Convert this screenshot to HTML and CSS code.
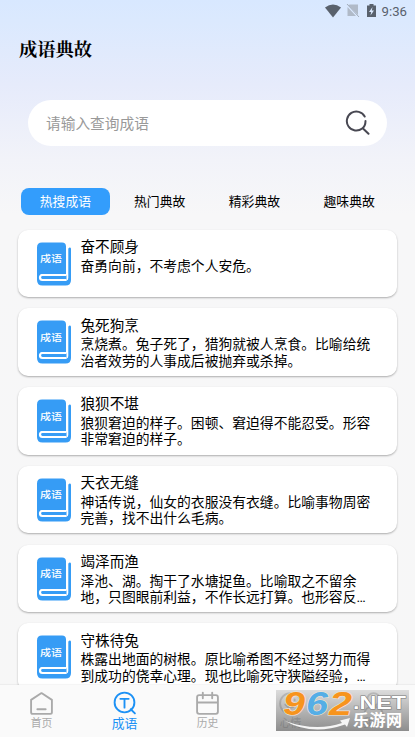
FILE: index.html
```html
<!DOCTYPE html>
<html lang="zh-CN">
<head>
<meta charset="utf-8">
<title>成语典故</title>
<link rel="stylesheet" href="styles.css">
</head>
<body>
<svg class="defs" width="0" height="0">
  <symbol id="book" viewBox="0 0 34 44">
    <path d="M5 .5H25Q29 .5 29 4.500V32H5.500Q2.500 32 2.500 35T5.500 38.500H29Q31.300 38.500 31.300 36V7Q31.300 5.500 32.700 5.500T34 7V38Q34 43.500 28.500 43.500H5.500Q0 43.500 0 38V5.500Q0 .5 5 .5Z" fill="#369cf5"/>
    <path d="M29.500 33H5.500a2.500 2.500 0 0 0 0 5H29.500" fill="#369cf5" stroke="#fff" stroke-width="2.200"/>
  </symbol>
</svg>
<div class="app">
  <div class="status">
    <svg width="52" height="16" viewBox="0 0 52 16">
      <path d="M0 4.500Q8 -1.500 16 4.500L8 14.500Z" fill="#59616c"/>
      <path d="M25 1.500H33V12L23 2ZM22.500 4L31 13H22.500Z" fill="#b0bac8"/>
      <path d="M22 1L34 14" stroke="#a4aebc" stroke-width="1"/>
      <path d="M42 2.500H44.500V1H48.500V2.500H51V14H42Z" fill="#59616c"/>
      <path d="M47.500 4L44 9H46.200L45.500 12.500L49 7.500H46.800Z" fill="#dbe9fd"/>
    </svg>
    <span>9:36</span>
  </div>
  <h1>成语典故</h1>
  <div class="search">
    <span>请输入查询成语</span>
    <svg width="26" height="26" viewBox="0 0 26 26" fill="none" stroke="#484852" stroke-width="2" stroke-linecap="round">
      <path d="M19.700 6.500A9.500 9.500 0 1 0 17.200 18.500Q20.500 16 20.500 11M18 18.500L23.500 23.800"/>
    </svg>
  </div>
  <div class="tabs"><span class="tab on">热搜成语</span><span class="tab">热门典故</span><span class="tab">精彩典故</span><span class="tab">趣味典故</span></div>
  <div class="list">
    <div class="card"><div class="book"><svg><use href="#book"/></svg><b>成语</b></div><div class="txt"><h2>奋不顾身</h2><p>奋勇向前，不考虑个人安危。</p></div></div>
    <div class="card"><div class="book"><svg><use href="#book"/></svg><b>成语</b></div><div class="txt"><h2>兔死狗烹</h2><p>烹烧煮。兔子死了，猎狗就被人烹食。比喻给统<br>治者效劳的人事成后被抛弃或杀掉。</p></div></div>
    <div class="card"><div class="book"><svg><use href="#book"/></svg><b>成语</b></div><div class="txt"><h2>狼狈不堪</h2><p>狼狈窘迫的样子。困顿、窘迫得不能忍受。形容<br>非常窘迫的样子。</p></div></div>
    <div class="card"><div class="book"><svg><use href="#book"/></svg><b>成语</b></div><div class="txt"><h2>天衣无缝</h2><p>神话传说，仙女的衣服没有衣缝。比喻事物周密<br>完善，找不出什么毛病。</p></div></div>
    <div class="card"><div class="book"><svg><use href="#book"/></svg><b>成语</b></div><div class="txt"><h2>竭泽而渔</h2><p>泽池、湖。掏干了水塘捉鱼。比喻取之不留余<br>地，只图眼前利益，不作长远打算。也形容反…</p></div></div>
    <div class="card"><div class="book"><svg><use href="#book"/></svg><b>成语</b></div><div class="txt"><h2>守株待兔</h2><p>株露出地面的树根。原比喻希图不经过努力而得<br>到成功的侥幸心理。现也比喻死守狭隘经验，…</p></div></div>
  </div>
  <div class="nav">
    <div class="item"><svg viewBox="0 0 24 24"><path d="M2 8.500L12 2L22 8.500V20.500Q22 22 20.500 22H3.500Q2 22 2 20.500ZM8 17.500H16"/></svg><span>首页</span></div>
    <div class="item on"><svg viewBox="0 0 24 24"><circle cx="12" cy="11" r="9.500"/><path d="M8 7.500H16M12 7.500V16M18 17.500L22 21.500"/></svg><span>成语</span></div>
    <div class="item"><svg viewBox="0 0 24 24"><path d="M4 4H20Q22 4 22 6V20Q22 22 20 22H4Q2 22 2 20V6Q2 4 4 4ZM2 11H22M7.500 1.500V7M16.500 1.500V7"/></svg><span>历史</span></div>
    <div class="item"><svg viewBox="0 0 24 24"><circle cx="12" cy="12" r="10"/><path d="M7 13Q12 19 17 13M8 8V9M16 8V9"/></svg><span>心情</span></div>
    <div class="item"><svg viewBox="0 0 24 24"><circle cx="12" cy="8" r="6"/><path d="M3 22Q4 15 12 15T21 22"/></svg><span>我的</span></div>
  </div>
  <div class="mark">
    <svg width="133" height="41" viewBox="0 0 133 41">
      <path d="M9 31Q40 42 66 33L64 30.500L74 28L71 37L69 34.500Q36 46 9 31Z" fill="#f5f5f5"/>
      <g class="digits"><text x="7" y="25" textLength="22" lengthAdjust="spacingAndGlyphs" fill="#f7941d">9</text><text x="30" y="25" textLength="22" lengthAdjust="spacingAndGlyphs" fill="#55aee6">6</text><text x="53" y="25" textLength="23" lengthAdjust="spacingAndGlyphs" fill="#f7941d">2</text></g>
      <text class="net" x="77" y="19" textLength="53" lengthAdjust="spacingAndGlyphs">.NET</text>
      <text class="cn" x="77" y="36" textLength="49">乐游网</text>
    </svg>
  </div>
</div>
</body>
</html>
```
FILE: styles.css
```css
* { box-sizing: border-box; }
body {
  margin: 0;
  font-family: Roboto, "Noto Sans CJK SC", sans-serif;
  color: #111;
}
.defs { position: absolute; }
.app {
  position: relative;
  width: 415px;
  height: 737px;
  overflow: hidden;
  display: flex;
  flex-direction: column;
  background: linear-gradient(#d8e8ff 0, #dbe9fe 20px, #e6ebfb 85px, #f2f3f9 160px, #f7f7f8 215px, #f7f7f7 100%);
}
.status {
  flex: none;
  height: 24px;
  padding: 0 8px 2px 0;
  display: flex;
  justify-content: flex-end;
  align-items: center;
  gap: 5px;
  color: #59616c;
  font-size: 13.200px;
}
h1 {
  flex: none;
  margin: 10px 0 0 19px;
  height: 28px;
  font: 700 18.300px/28px "Noto Serif CJK SC", "Noto Serif SC", "Noto Sans CJK SC", serif;
  color: #000;
}
.search {
  flex: none;
  margin: 38px 28px 0;
  height: 46px;
  padding: 0 16px 0 18px;
  border-radius: 23px;
  background: #fff;
  display: flex;
  align-items: center;
  justify-content: space-between;
  color: #999;
  font-size: 14.700px;
}
.search span { margin-top: -2px; }
.tabs {
  flex: none;
  margin: 42px 18.500px 0 17.500px;
  display: grid;
  grid-template-columns: repeat(4, 1fr);
  font-size: 12.800px;
  line-height: 27px;
  text-align: center;
  color: #000;
}
.tab { margin: 0 3px; }
.tab.on { margin: 0 2.500px 0 3.500px; border-radius: 8px; background: #339dfc; color: #fff; }
.list {
  flex: 1;
  min-height: 0;
  overflow: hidden;
  padding: 14.700px 18px 0;
  display: flex;
  flex-direction: column;
  gap: 11.250px;
}
.card {
  flex: none;
  height: 67.500px;
  border-radius: 10px;
  background: #fff;
  box-shadow: 0 1px 2px rgba(0, 0, 0, .3);
  display: flex;
  padding: 12px 0 0 19px;
}
.book { position: relative; flex: none; width: 34px; height: 44px; }
.book svg { width: 34px; height: 44px; display: block; }
.book b {
  position: absolute;
  left: 0;
  top: 9.500px;
  width: 28px;
  font-size: 11px;
  line-height: 16px;
  color: #fff;
  text-align: center;
  font-weight: 500;
  transform: scaleY(.84);
}
.txt { margin: -4.900px 0 0 9.500px; white-space: nowrap; }
h2 { margin: 0; font-size: 14.600px; line-height: 20px; font-weight: 400; color: #000; }
p { margin: .8px 0 0; font-size: 13.800px; line-height: 16.300px; color: #000; }
.nav {
  flex: none;
  height: 52px;
  background: #fafafa;
  box-shadow: 0 -1px 1px rgba(0, 0, 0, .04);
  display: grid;
  grid-template-columns: repeat(5, 1fr);
  position: relative;
}
.item {
  display: flex;
  flex-direction: column;
  align-items: center;
  padding-top: 6px;
  color: #aaa;
  font-size: 10.800px;
  line-height: 16px;
}
.item svg { width: 25px; height: 25px; fill: none; stroke: currentColor; stroke-width: 1.800; stroke-linecap: round; stroke-linejoin: round; }
.item.on { color: #1c91f5; font-size: 12.800px; line-height: 15px; }
.mark {
  position: absolute;
  left: 276px;
  top: 690px;
  width: 133px;
  height: 41px;
  background: linear-gradient(rgba(200, 200, 200, .6), rgba(105, 105, 105, .75));
}
.mark svg { display: block; overflow: visible; }
.digits { font: italic 700 33px "Liberation Sans", sans-serif; stroke: #f3e6d8; stroke-width: 1.200px; paint-order: stroke; }
.net { font: 700 19px "Liberation Sans", sans-serif; fill: #fff; stroke: #777; stroke-width: 1px; paint-order: stroke; }
.cn { font: 700 16px "Noto Sans CJK SC", sans-serif; fill: #fff; }
```
